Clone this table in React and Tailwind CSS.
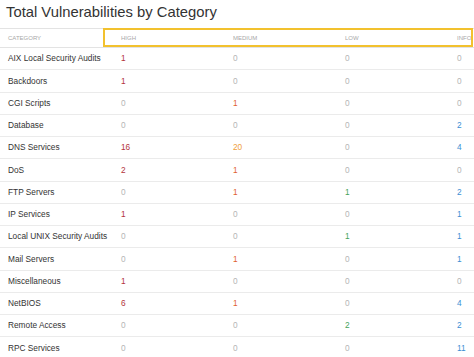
const rows = [
  ['AIX Local Security Audits', 1, 0, 0, 0],
  ['Backdoors', 1, 0, 0, 0],
  ['CGI Scripts', 0, 1, 0, 0],
  ['Database', 0, 0, 0, 2],
  ['DNS Services', 16, 20, 0, 4],
  ['DoS', 2, 1, 0, 0],
  ['FTP Servers', 0, 1, 1, 2],
  ['IP Services', 1, 0, 0, 1],
  ['Local UNIX Security Audits', 0, 0, 1, 1],
  ['Mail Servers', 0, 1, 0, 1],
  ['Miscellaneous', 1, 0, 0, 0],
  ['NetBIOS', 6, 1, 0, 4],
  ['Remote Access', 0, 0, 2, 2],
  ['RPC Services', 0, 0, 0, 11],
];

// colour per column when the count is not zero
const colors = ['text-[#b3343a]', 'text-[#e0622f]', 'text-[#45a35a]', 'text-[#3b8fd4]'];

function Count({ value, col }) {
  if (value === 0) return <span className="text-[#b5b5b5]">0</span>;
  const cls = col === 1 && value >= 10 ? 'text-[#f0a03c]' : colors[col];
  return <span className={cls}>{value}</span>;
}

export default function App() {
  return (
    <div
      className="relative w-[474px] h-[357px] overflow-hidden bg-white"
      style={{ fontFamily: '"Liberation Sans", Arial, sans-serif' }}
    >
      <h2 className="pl-[6px] pt-[2px] h-[28px] text-[14.8px] leading-[20px] text-[#333]">
        Total Vulnerabilities by Category
      </h2>

      {/* Header */}
      <div className="grid grid-cols-[113px_112px_112px_112px_1fr] h-[20px] items-center border-t border-b border-[#e3e3e3] text-[6px] text-[#a8a8a8] uppercase">
        <div className="pl-2">Category</div>
        <div className="pl-2">High</div>
        <div className="pl-2">Medium</div>
        <div className="pl-2">Low</div>
        <div className="pl-2">Info</div>
      </div>

      {/* Rows */}
      {rows.map((r) => (
        <div
          key={r[0]}
          className="grid grid-cols-[113px_112px_112px_112px_1fr] h-[22.25px] items-center border-b border-[#ebebeb] text-[8.3px] text-[#333]"
        >
          <div className="pl-2 whitespace-nowrap">{r[0]}</div>
          {r.slice(1).map((v, i) => (
            <div key={i} className="pl-2">
              <Count value={v} col={i} />
            </div>
          ))}
        </div>
      ))}

      {/* Highlight box */}
      <div className="absolute left-[103px] top-[28px] w-[370px] h-[19px] border-2 border-[#f2c12e] pointer-events-none" />

      {/* Watermarks */}
      <div className="absolute left-[128px] top-[74px] text-[15.5px] font-bold text-[#000]/[0.025] pointer-events-none">
        WWW.HACKINGARTICLES.IN
      </div>
      <div className="absolute left-[128px] top-[256px] text-[15.5px] font-bold text-[#000]/[0.025] pointer-events-none">
        WWW.HACKINGARTICLES.IN
      </div>
    </div>
  );
}
